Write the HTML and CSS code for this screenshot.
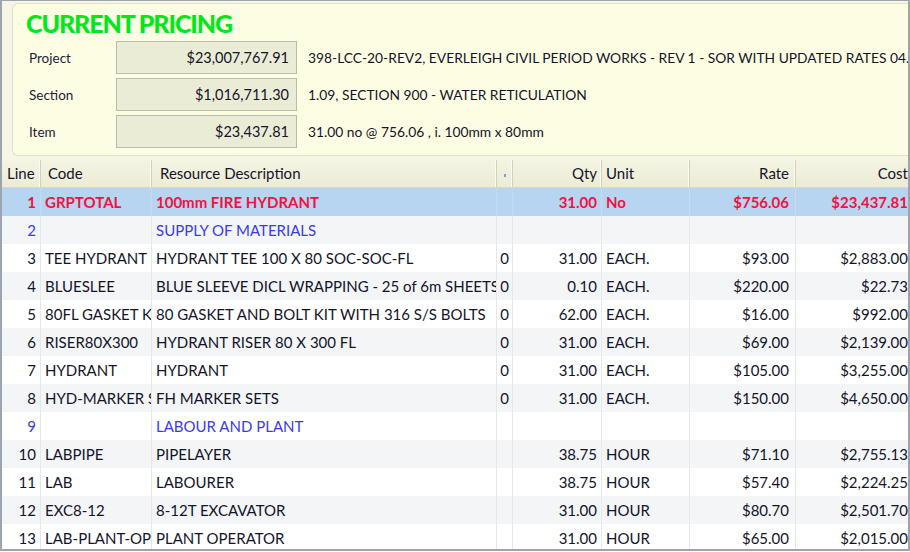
FILE: index.html
```html
<!DOCTYPE html>
<html>
<head>
<meta charset="utf-8">
<link rel="stylesheet" href="styles.css">
</head>
<body>
<div class="frame">
  <div class="top">
    <div class="panel">
      <div class="title">CURRENT PRICING</div>
      <div class="info-row"><span class="label">Project</span><span class="valbox">$23,007,767.91</span><span class="desc">398-LCC-20-REV2, EVERLEIGH CIVIL PERIOD WORKS - REV 1 - SOR WITH UPDATED RATES 04.08.2017</span></div>
      <div class="info-row"><span class="label">Section</span><span class="valbox">$1,016,711.30</span><span class="desc">1.09, SECTION 900 - WATER RETICULATION</span></div>
      <div class="info-row"><span class="label">Item</span><span class="valbox">$23,437.81</span><span class="desc">31.00 no @ 756.06 , i. 100mm x 80mm</span></div>
    </div>
  </div>
  <div class="grid">
    <div class="row head">
      <div class="c line">Line</div><div class="c code">Code</div><div class="c rd">Resource Description</div><div class="c tiny"><span class="dot"></span></div><div class="c qty r">Qty</div><div class="c unit">Unit</div><div class="c rate r">Rate</div><div class="c cost r">Cost</div>
    </div>
    <div class="row sel red">
      <div class="c line r">1</div><div class="c code">GRPTOTAL</div><div class="c rd">100mm FIRE HYDRANT</div><div class="c tiny"></div><div class="c qty r">31.00</div><div class="c unit">No</div><div class="c rate r">$756.06</div><div class="c cost r">$23,437.81</div>
    </div>
    <div class="row alt blue">
      <div class="c line r">2</div><div class="c code"></div><div class="c rd">SUPPLY OF MATERIALS</div><div class="c tiny"></div><div class="c qty r"></div><div class="c unit"></div><div class="c rate r"></div><div class="c cost r"></div>
    </div>
    <div class="row">
      <div class="c line r">3</div><div class="c code">TEE HYDRANT</div><div class="c rd">HYDRANT TEE 100 X 80 SOC-SOC-FL</div><div class="c tiny">0</div><div class="c qty r">31.00</div><div class="c unit">EACH.</div><div class="c rate r">$93.00</div><div class="c cost r">$2,883.00</div>
    </div>
    <div class="row alt">
      <div class="c line r">4</div><div class="c code">BLUESLEE</div><div class="c rd">BLUE SLEEVE DICL WRAPPING - 25 of 6m SHEETS</div><div class="c tiny">0</div><div class="c qty r">0.10</div><div class="c unit">EACH.</div><div class="c rate r">$220.00</div><div class="c cost r">$22.73</div>
    </div>
    <div class="row">
      <div class="c line r">5</div><div class="c code">80FL GASKET KIT</div><div class="c rd">80 GASKET AND BOLT KIT WITH 316 S/S BOLTS</div><div class="c tiny">0</div><div class="c qty r">62.00</div><div class="c unit">EACH.</div><div class="c rate r">$16.00</div><div class="c cost r">$992.00</div>
    </div>
    <div class="row alt">
      <div class="c line r">6</div><div class="c code">RISER80X300</div><div class="c rd">HYDRANT RISER 80 X 300 FL</div><div class="c tiny">0</div><div class="c qty r">31.00</div><div class="c unit">EACH.</div><div class="c rate r">$69.00</div><div class="c cost r">$2,139.00</div>
    </div>
    <div class="row">
      <div class="c line r">7</div><div class="c code">HYDRANT</div><div class="c rd">HYDRANT</div><div class="c tiny">0</div><div class="c qty r">31.00</div><div class="c unit">EACH.</div><div class="c rate r">$105.00</div><div class="c cost r">$3,255.00</div>
    </div>
    <div class="row alt">
      <div class="c line r">8</div><div class="c code">HYD-MARKER SET</div><div class="c rd">FH MARKER SETS</div><div class="c tiny">0</div><div class="c qty r">31.00</div><div class="c unit">EACH.</div><div class="c rate r">$150.00</div><div class="c cost r">$4,650.00</div>
    </div>
    <div class="row blue">
      <div class="c line r">9</div><div class="c code"></div><div class="c rd">LABOUR AND PLANT</div><div class="c tiny"></div><div class="c qty r"></div><div class="c unit"></div><div class="c rate r"></div><div class="c cost r"></div>
    </div>
    <div class="row alt">
      <div class="c line r">10</div><div class="c code">LABPIPE</div><div class="c rd">PIPELAYER</div><div class="c tiny"></div><div class="c qty r">38.75</div><div class="c unit">HOUR</div><div class="c rate r">$71.10</div><div class="c cost r">$2,755.13</div>
    </div>
    <div class="row">
      <div class="c line r">11</div><div class="c code">LAB</div><div class="c rd">LABOURER</div><div class="c tiny"></div><div class="c qty r">38.75</div><div class="c unit">HOUR</div><div class="c rate r">$57.40</div><div class="c cost r">$2,224.25</div>
    </div>
    <div class="row alt">
      <div class="c line r">12</div><div class="c code">EXC8-12</div><div class="c rd">8-12T EXCAVATOR</div><div class="c tiny"></div><div class="c qty r">31.00</div><div class="c unit">HOUR</div><div class="c rate r">$80.70</div><div class="c cost r">$2,501.70</div>
    </div>
    <div class="row">
      <div class="c line r">13</div><div class="c code">LAB-PLANT-OP</div><div class="c rd">PLANT OPERATOR</div><div class="c tiny"></div><div class="c qty r">31.00</div><div class="c unit">HOUR</div><div class="c rate r">$65.00</div><div class="c cost r">$2,015.00</div>
    </div>
  </div>
</div>
</body>
</html>
```
FILE: styles.css
```css
html, body {
  margin: 0;
  padding: 0;
  width: 910px;
  height: 552px;
  overflow: hidden;
  background: #ffffff;
}
body {
  font-family: Lato, "Open Sans", sans-serif;
  color: #14142a;
}
.frame {
  width: 910px;
  height: 551px;
  box-sizing: border-box;
  border-left: 2px solid #9ca5ad;
  border-right: 2px solid #9ca5ad;
  border-top: 1px solid #9ca5ad;
  border-bottom: 2px solid #9ca5ad;
  overflow: hidden;
  background: #ffffff;
}
.top {
  background: #f5f6e4;
  height: 159px;
  padding: 2px 0 0 10px;
  box-sizing: border-box;
}
.panel {
  background: #fdfde3;
  border: 1px solid #dde1c6;
  border-right: none;
  border-radius: 6px 0 0 6px;
  height: 153px;
  box-sizing: border-box;
  padding: 5px 0 0 13px;
  white-space: nowrap;
  overflow: hidden;
}
.title {
  font-weight: 900;
  font-size: 25px;
  line-height: 28px;
  color: #00e81c;
  letter-spacing: -1.1px;
  height: 30px;
}
.info-row {
  display: flex;
  align-items: center;
  height: 37px;
  font-size: 13.5px;
}
.label {
  flex: 0 0 90px;
  padding-left: 3px;
  box-sizing: border-box;
  color: #1c1c3a;
}
.valbox {
  flex: 0 0 181px;
  height: 33px;
  box-sizing: border-box;
  border: 1px solid #b9bcab;
  background: #ebecd6;
  text-align: right;
  padding-right: 7px;
  line-height: 31px;
  font-size: 14.5px;
}
.desc {
  margin-left: 11px;
  font-size: 13.8px;
}
.grid {
  font-size: 15px;
}
.row {
  display: flex;
  height: 28px;
  line-height: 28px;
  background: #ffffff;
  white-space: nowrap;
}
.row.alt {
  background: #f3f5f7;
}
.c {
  flex: 0 0 auto;
  box-sizing: border-box;
  overflow: hidden;
  padding: 0 4px;
  border-right: 1px solid #e4e8eb;
  text-overflow: clip;
}
.r { text-align: right; }
.line { width: 39px; padding-right: 4px; }
.code { width: 111px; }
.rd { width: 345px; }
.tiny { width: 16px; padding: 0; text-align: center; }
.qty { width: 89px; }
.unit { width: 88px; }
.rate { width: 106px; padding-right: 6px; }
.cost { width: 112px; border-right: none; padding-right: 0; }

.head {
  background: linear-gradient(#f4f4e2, #ebebd6);
  height: 28px;
  line-height: 27px;
  border-bottom: 1px solid #d8dac6;
  box-sizing: border-box;
}
.head .c {
  border-right: 1px solid #cfd1bd;
  box-shadow: inset -1px 0 0 #fbfbef;
}
.head .line { padding-left: 5px; padding-right: 0; }
.head .code { padding-left: 7px; }
.head .rd { padding-left: 8px; }
.head .cost { border-right: none; box-shadow: none; }
.dot {
  display: inline-block;
  width: 2px;
  height: 3px;
  background: #6aa8d8;
  vertical-align: middle;
}
.sel {
  background: #b7d5f1;
}
.sel .c { border-right-color: #c4dcf3; }
.red {
  color: #f2123f;
  font-weight: 700;
}
.blue {
  color: #3a3aee;
}
```
